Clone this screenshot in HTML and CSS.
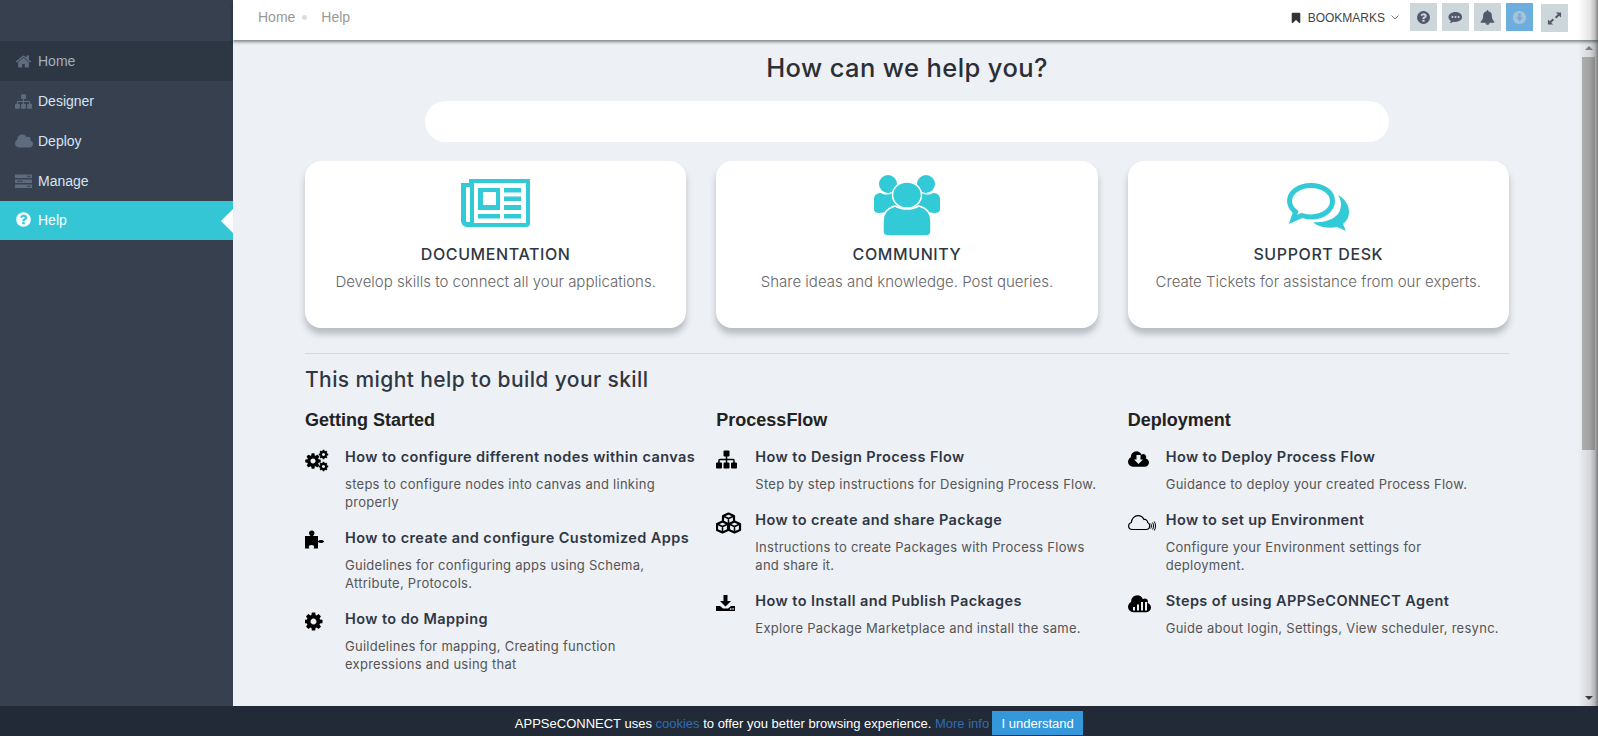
FILE: index.html
```html
<!DOCTYPE html>
<html lang="en">
<head>
  <meta charset="UTF-8" />
  <title>Help - APPSeCONNECT</title>
  <link rel="stylesheet" href="styles.css">
</head>
<body>
  <svg class="sprites" width="0" height="0">
    <symbol id="i-home" viewBox="0 0 1792 1792"><path d="M1472 992v480q0 26-19 45t-45 19h-384v-384h-256v384h-384q-26 0-45-19t-19-45v-480q0-1 .5-3t.5-3l575-474 575 474q1 2 1 6zm223-69l-62 74q-8 9-21 11h-3q-13 0-21-7l-692-577-692 577q-12 8-24 7-13-2-21-11l-62-74q-8-10-7-23.500t11-21.500l719-599q32-26 76-26t76 26l244 204v-195q0-14 9-23t23-9h192q14 0 23 9t9 23v408l219 182q10 8 11 21.500t-7 23.500z"/></symbol>
    <symbol id="i-sitemap" viewBox="0 0 1792 1792"><path d="M1792 1248v320q0 40-28 68t-68 28h-320q-40 0-68-28t-28-68v-320q0-40 28-68t68-28h96v-192h-512v192h96q40 0 68 28t28 68v320q0 40-28 68t-68 28h-320q-40 0-68-28t-28-68v-320q0-40 28-68t68-28h96v-192h-512v192h96q40 0 68 28t28 68v320q0 40-28 68t-68 28h-320q-40 0-68-28t-28-68v-320q0-40 28-68t68-28h96v-192q0-52 38-90t90-38h512v-192h-96q-40 0-68-28t-28-68v-320q0-40 28-68t68-28h320q40 0 68 28t28 68v320q0 40-28 68t-68 28h-96v192h512q52 0 90 38t38 90v192h96q40 0 68 28t28 68z"/></symbol>
    <symbol id="i-cloud" viewBox="0 0 1920 1792"><path d="M1920 1216q0 159-112.500 271.500t-271.500 112.500h-1088q-185 0-316.500-131.500t-131.500-316.500q0-132 71-241.500t187-163.500q-2-28-2-43 0-212 150-362t362-150q158 0 286.500 88t187.500 230q70-62 166-62 106 0 181 75t75 181q0 75-41 138 129 30 213 134.500t84 239.500z"/></symbol>
    <symbol id="i-question" viewBox="0 0 1792 1792"><path d="M1024 1376v-192q0-14-9-23t-23-9h-192q-14 0-23 9t-9 23v192q0 14 9 23t23 9h192q14 0 23-9t9-23zm256-672q0-88-55.500-163t-138.500-116-170-41q-243 0-371 213-15 24 8 42l132 100q7 6 19 6 16 0 25-12 53-68 86-92 34-24 86-24 48 0 85.500 26t37.500 59q0 38-20 61t-68 45q-63 28-115.500 86.500t-52.500 125.500v36q0 14 9 23t23 9h192q14 0 23-9t9-23q0-19 21.500-49.500t54.500-49.500q32-18 49-28.500t46-35 44.500-48 28-60.500 12.500-81zm384 192q0 209-103 385.500t-279.500 279.500-385.500 103-385.500-103-279.500-279.500-103-385.500 103-385.500 279.500-279.500 385.500-103 385.500 103 279.500 279.500 103 385.500z"/></symbol>
    <symbol id="i-bell" viewBox="0 0 1792 1792"><path d="M912 1696q0-16-16-16-59 0-101.500-42.500t-42.500-101.500q0-16-16-16t-16 16q0 73 51.500 124.500t124.500 51.500q16 0 16-16zm816-288q0 52-38 90t-90 38h-448q0 106-75 181t-181 75-181-75-75-181h-448q-52 0-90-38t-38-90q50-42 91-88t85-119.500 74.500-158.500 50-206 19.500-260q0-152 117-282.500t307-158.500q-8-19-8-39 0-40 28-68t68-28 68 28 28 68q0 20-8 39 190 28 307 158.500t117 282.500q0 139 19.500 260t50 206 74.500 158.500 85 119.500 91 88z"/></symbol>
    <symbol id="i-bookmark" viewBox="0 0 1792 1792"><path d="M1420 128q23 0 44 9 33 13 52.500 41t19.500 62v1289q0 34-19.500 62t-52.500 41q-19 8-44 8-48 0-83-32l-441-424-441 424q-36 33-83 33-23 0-44-9-33-13-52.500-41t-19.500-62v-1289q0-34 19.500-62t52.500-41q21-9 44-9h1048z"/></symbol>
    <symbol id="i-cog" viewBox="0 0 1792 1792"><path d="M1152 896q0-106-75-181t-181-75-181 75-75 181 75 181 181 75 181-75 75-181zm512-109v222q0 12-8 23t-20 13l-185 28q-19 54-39 91 35 50 107 138 10 12 10 25t-9 23q-27 37-99 108t-94 71q-12 0-26-9l-138-108q-44 23-91 38-16 136-29 186-7 28-36 28h-222q-14 0-24.500-8.500t-11.500-21.500l-28-184q-49-16-90-37l-141 107q-10 9-25 9-14 0-25-11-126-114-165-168-7-10-7-23 0-12 8-23 15-21 51-66.500t54-70.500q-27-50-41-99l-183-27q-13-2-21-12.500t-8-23.500v-222q0-12 8-23t19-13l186-28q14-46 39-92-40-57-107-138-10-12-10-24 0-10 9-23 26-36 98.500-107.500t94.500-71.500q13 0 26 10l138 107q44-23 91-38 16-136 29-186 7-28 36-28h222q14 0 24.500 8.500t11.500 21.500l28 184q49 16 90 37l142-107q9-9 24-9 13 0 25 10 129 119 165 170 7 8 7 22 0 12-8 23-15 21-51 66.500t-54 70.500q26 50 41 98l183 28q13 2 21 12.500t8 23.500z"/></symbol>
  </svg>

  <div class="app">
    <aside class="sidebar">
      <nav class="side-nav">
        <a class="side-item side-item-current"><svg class="side-icon"><use href="#i-home"/></svg>Home</a>
        <a class="side-item"><svg class="side-icon"><use href="#i-sitemap"/></svg>Designer</a>
        <a class="side-item"><svg class="side-icon side-icon-wide"><use href="#i-cloud"/></svg>Deploy</a>
        <a class="side-item">
          <svg class="side-icon" viewBox="0 0 17 14"><path d="M0 0h17v3.500H0zM0 5h17v3.500H0zM0 10h17v3.500H0z"/><path class="side-slot" d="M12 1.200h3.500v1H12zM2 6.200h6v1H2zM12 11.200h3.500v1H12z"/></svg>
          Manage
        </a>
        <a class="side-item side-item-active"><svg class="side-icon"><use href="#i-question"/></svg>Help</a>
      </nav>
    </aside>

    <div class="main">
      <header class="topbar">
        <div class="crumbs">
          <span>Home</span>
          <i class="crumb-dot"></i>
          <span>Help</span>
        </div>
        <div class="top-tools">
          <div class="bookmarks">
            <svg class="bookmark-icon"><use href="#i-bookmark"/></svg>
            <span>BOOKMARKS</span>
            <svg class="bookmark-caret" viewBox="0 0 8 5"><path d="M.5.5 4 4 7.500.5" fill="none" stroke="#777" stroke-width="1"/></svg>
          </div>
          <button class="tool-btn"><svg class="tool-icon"><use href="#i-question"/></svg></button>
          <button class="tool-btn">
            <svg class="tool-icon" viewBox="0 0 16 16"><path d="M8 2C3.600 2 .5 4.500.5 7.500c0 1.700 1 3.200 2.600 4.200-.2 1-.7 1.800-1.300 2.500 1.500-.2 2.800-.8 3.800-1.700.6.100 1.200.2 1.900.2 4.400 0 7.500-2.300 7.500-5.200S12.400 2 8 2z"/><circle class="tool-dot" cx="4.700" cy="7.500" r="1.100"/><circle class="tool-dot" cx="8" cy="7.500" r="1.100"/><circle class="tool-dot" cx="11.300" cy="7.500" r="1.100"/></svg>
          </button>
          <button class="tool-btn"><svg class="tool-icon"><use href="#i-bell"/></svg></button>
          <button class="tool-btn tool-btn-blue">
            <svg class="tool-icon" viewBox="0 0 16 16"><circle cx="8" cy="8" r="7"/><path class="tool-arrow" d="M6.600 3.500h2.800v4.300h2.200L8 12 4.400 7.800h2.200z"/></svg>
          </button>
          <button class="tool-btn tool-btn-last">
            <svg class="tool-icon" viewBox="0 0 16 16"><path d="M9.500 1.500H15V7l-2-2-3 3-1.500-1.500 3-3zM6.500 14.500H1V9l2 2 3-3 1.500 1.500-3 3z"/></svg>
          </button>
        </div>
      </header>

      <div class="body-row">
        <main class="content">
          <h1 class="help-title">How can we help you?</h1>
          <div class="search-box"></div>

          <section class="card-grid">
            <div class="card">
              <svg class="card-icon" width="69" height="61" viewBox="0 0 69 61">
                <g transform="translate(0 4)">
                  <path d="M8 0H69V44a4 4 0 0 1-4 4H6a6 6 0 0 1-6-6V4H8z"/>
                  <path class="card-cut" d="M13 4H65V44H13zM5 8H9V43H6.500A1.500 1.500 0 0 1 5 41.500z"/>
                  <path d="M17 9H39V31H17zM43 9H60V13.500H43zM43 17.500H60V22H43zM43 26H60V31H43zM17 35H39V39.500H17zM43 35H60V39.500H43z"/>
                  <path class="card-cut" d="M22 13H35V26H22z"/>
                </g>
              </svg>
              <h3 class="card-title">DOCUMENTATION</h3>
              <p class="card-text">Develop skills to connect all your applications.</p>
            </div>
            <div class="card">
              <svg class="card-icon" width="66" height="61" viewBox="0 0 66 61">
                <ellipse cx="14" cy="9" rx="9" ry="9"/>
                <ellipse cx="52" cy="9" rx="9" ry="9"/>
                <path d="M0 34V24C0 20 3 18 7 18c3 2 8 2 11 0l7 8v9L6 38C2 38 0 37 0 34zM66 34V24c0-4-3-6-7-6-3 2-8 2-11 0l-7 8v9l19 3c4 0 6-1 6-4z"/>
                <path class="card-ring" d="M9 56V46C9 38 14 33 21 31c7 4 17 4 24 0 7 2 12 7 12 15v10c0 3-2 5-5 5H14c-3 0-5-2-5-5z"/>
                <ellipse class="card-ring" cx="33" cy="20" rx="14.500" ry="13"/>
              </svg>
              <h3 class="card-title">COMMUNITY</h3>
              <p class="card-text">Share ideas and knowledge. Post queries.</p>
            </div>
            <div class="card">
              <svg class="card-icon" width="62" height="61" viewBox="0 0 62 61">
                <g transform="translate(0 8)">
                  <path d="M51 12c7 4 11 10 11 17 0 5-2 9-6 12l3 7-9-4c-4 1-9 1-14 0-4-1-7-2-10-5 10 1 20-2 25-8 4-6 4-13 0-19z"/>
                  <path class="chat-line" d="M24 2.500C12 2.500 2.500 9.500 2.500 18c0 4.500 2.500 8 6 11l-2.500 7.500 9-4c3 1 6 1.500 9 1.500 12 0 21.500-7 21.500-16S36 2.500 24 2.500z"/>
                </g>
              </svg>
              <h3 class="card-title">SUPPORT DESK</h3>
              <p class="card-text">Create Tickets for assistance from our experts.</p>
            </div>
          </section>

          <hr class="divider">
          <h2 class="skill-title">This might help to build your skill</h2>

          <section class="tip-grid">
            <div class="tip-col tip-col-first">
              <h4 class="tip-head">Getting Started</h4>
              <div class="tip">
                <svg class="tip-icon" viewBox="0 0 28 24">
                  <svg x="-1" y="4" width="18" height="18"><use href="#i-cog"/></svg>
                  <svg x="13" y="1" width="11" height="11"><use href="#i-cog"/></svg>
                  <svg x="13" y="13" width="11" height="11"><use href="#i-cog"/></svg>
                </svg>
                <div>
                  <div class="tip-title">How to configure different nodes within canvas</div>
                  <p class="tip-text">steps to configure nodes into canvas and linking properly</p>
                </div>
              </div>
              <div class="tip">
                <svg class="tip-icon" viewBox="0 0 28 24"><path d="M0 7h5.500C4.500 6 4 5 4 4c0-1.500 1.200-2.500 2.800-2.500S9.500 2.500 9.500 4c0 1-.5 2-1.500 3h5v5c1-.8 2-1 3-1 1.500 0 3 .6 3 1.500S17.500 14 16 14c-1 0-2-.3-3-1v6.500H8.500c.8-1 1-2 0-3-1-.7-3-.7-4 0-1 1-.8 2 0 3H0z"/></svg>
                <div>
                  <div class="tip-title">How to create and configure Customized Apps</div>
                  <p class="tip-text">Guidelines for configuring apps using Schema, Attribute, Protocols.</p>
                </div>
              </div>
              <div class="tip">
                <svg class="tip-icon" viewBox="0 0 28 24"><svg x="-2" y="1" width="21" height="21"><use href="#i-cog"/></svg></svg>
                <div>
                  <div class="tip-title">How to do Mapping</div>
                  <p class="tip-text">Guildelines for mapping, Creating function expressions and using that</p>
                </div>
              </div>
            </div>

            <div class="tip-col tip-col-second">
              <h4 class="tip-head">ProcessFlow</h4>
              <div class="tip">
                <svg class="tip-icon" viewBox="0 0 28 24"><svg x="0" y="1" width="21" height="21"><use href="#i-sitemap"/></svg></svg>
                <div>
                  <div class="tip-title">How to Design Process Flow</div>
                  <p class="tip-text">Step by step instructions for Designing Process Flow.</p>
                </div>
              </div>
              <div class="tip">
                <svg class="tip-icon" viewBox="0 0 28 24">
                  <path class="cube" d="M12.500 2.500l5.500 2.500v6l-5.500 2.500L7 11V5z"/>
                  <path class="cube" d="M6.500 10.500L12 13v6l-5.500 2.500L1 19v-6z"/>
                  <path class="cube" d="M18.500 10.500L24 13v6l-5.500 2.500L13 19v-6z"/>
                  <path d="M7 5l5.500 2.500L18 5M1 13l5.500 2.500L12 13M13 13l5.500 2.500L24 13M12.500 7.500v5M6.500 15.500v5M18.500 15.500v5" fill="none" stroke="#000" stroke-width="1.600"/>
                </svg>
                <div>
                  <div class="tip-title">How to create and share Package</div>
                  <p class="tip-text">Instructions to create Packages with Process Flows and share it.</p>
                </div>
              </div>
              <div class="tip">
                <svg class="tip-icon" viewBox="0 0 28 24"><path d="M7.500 3h4v6H15l-5.500 5.500L4 9h3.500z"/><path d="M0 14h4l3 2.500h5l3-2.500h4v5H0z"/><path class="tip-cut" d="M14 16.300h1.400v1.400H14zM16.400 16.300h1.400v1.400h-1.400z"/></svg>
                <div>
                  <div class="tip-title">How to Install and Publish Packages</div>
                  <p class="tip-text">Explore Package Marketplace and install the same.</p>
                </div>
              </div>
            </div>

            <div class="tip-col tip-col-third">
              <h4 class="tip-head">Deployment</h4>
              <div class="tip">
                <svg class="tip-icon" viewBox="0 0 28 24">
                  <svg x="0" y="1" width="21" height="20"><use href="#i-cloud"/></svg>
                  <path class="tip-cut" d="M8.500 7h4v4.500H15L10.500 16 6 11.500h2.500z"/>
                </svg>
                <div>
                  <div class="tip-title">How to Deploy Process Flow</div>
                  <p class="tip-text">Guidance to deploy your created Process Flow.</p>
                </div>
              </div>
              <div class="tip">
                <svg class="tip-icon" viewBox="0 0 28 24"><path d="M4.500 18.500C2 18.500.6 16.800.6 15c0-1.800 1.200-3 2.800-3.500C3.600 7.500 6.500 4.700 10 4.700c2.800 0 4.800 1.500 6 3.800 2-.3 3.500 1 3.700 3 1.300.5 2 1.700 2 3.200 0 2.300-1.500 3.800-3.700 3.800z" fill="none" stroke="#000" stroke-width="1.200"/><path d="M22.800 12.500c.8 1.500.8 3.500 0 5M24.600 11.500c1.200 2 1.200 5 0 7M26.300 10.500c1.600 2.600 1.600 6.400 0 9" fill="none" stroke="#000" stroke-width="1"/></svg>
                <div>
                  <div class="tip-title">How to set up Environment</div>
                  <p class="tip-text">Configure your Environment settings for deployment.</p>
                </div>
              </div>
              <div class="tip">
                <svg class="tip-icon" viewBox="0 0 28 24">
                  <svg x="0" y="1" width="23" height="21.500"><use href="#i-cloud"/></svg>
                  <path class="tip-cut" d="M5 15h2v3.500H5zM9 12.500h2v6H9zM13 10h2v8.500h-2zM17 10h2v8.500h-2z"/>
                </svg>
                <div>
                  <div class="tip-title">Steps of using APPSeCONNECT Agent</div>
                  <p class="tip-text">Guide about login, Settings, View scheduler, resync.</p>
                </div>
              </div>
            </div>
          </section>
        </main>

        <div class="scrollbar">
          <i class="scroll-up"></i>
          <div class="scroll-thumb"></div>
          <i class="scroll-down"></i>
        </div>
      </div>
    </div>
  </div>

  <div class="edge-shade"></div>

  <div class="cookie-bar">
    <span>APPSeCONNECT uses <a class="cookie-link">cookies</a> to offer you better browsing experience. <a class="cookie-link">More info</a></span>
    <button class="cookie-btn">I understand</button>
  </div>
</body>
</html>
```

FILE: styles.css
```css
* {
  box-sizing: border-box;
  margin: 0;
  padding: 0;
}

html, body {
  height: 100%;
  overflow: hidden;
}

body {
  font-family: 'Liberation Sans', Arial, sans-serif;
  background: #edf0f4;
}

.sprites {
  display: block;
  height: 0;
}

.app {
  display: flex;
  height: 736px;
}

/* sidebar */
.sidebar {
  width: 233px;
  flex-shrink: 0;
  background: #36404f;
  padding-top: 41px;
}

.side-item {
  position: relative;
  display: flex;
  align-items: center;
  height: 40px;
  padding-left: 15px;
  color: #d6e4f5;
  font-size: 14px;
}

.side-icon {
  width: 17px;
  height: 17px;
  margin-right: 6px;
  fill: #5f6b7f;
}

.side-icon-wide {
  width: 18px;
  height: 18px;
  margin-right: 5px;
}

.side-slot {
  fill: #36404f;
}

.side-item-current {
  background: #2d3643;
  color: #a3aebc;
}

.side-item-active {
  height: 39px;
  padding-bottom: 2px;
  background: #35c6d6;
  color: #fff;
}

.side-item-active .side-icon {
  fill: #fff;
}

.side-item-active::after {
  content: "";
  position: absolute;
  right: 0;
  top: 8px;
  border-style: solid;
  border-width: 12px 12px 12px 0;
  border-color: transparent #fff transparent transparent;
}

/* top bar */
.main {
  flex: 1;
  display: flex;
  flex-direction: column;
  min-width: 0;
}

.topbar {
  position: relative;
  z-index: 2;
  display: flex;
  align-items: flex-start;
  justify-content: space-between;
  height: 40px;
  padding: 0 30px 0 25px;
  background: #fff;
  box-shadow: 0 2px 3px rgba(0,0,0,0.45);
}

.crumbs {
  display: flex;
  align-items: center;
  height: 34px;
  color: #999;
  font-size: 14px;
}

.crumb-dot {
  width: 5px;
  height: 5px;
  margin: 0 14px 0 7px;
  border-radius: 50%;
  background: #ddd;
}

.top-tools {
  display: flex;
  align-items: flex-start;
  gap: 5px;
  padding-top: 3px;
}

.bookmarks {
  display: flex;
  align-items: center;
  height: 29px;
  margin-right: 6px;
  color: #444;
  font-size: 12px;
}

.bookmark-icon {
  width: 12px;
  height: 12px;
  margin-right: 6px;
  fill: #333;
}

.bookmark-caret {
  width: 8px;
  height: 5px;
  margin-left: 6px;
}

.tool-btn {
  display: flex;
  align-items: center;
  justify-content: center;
  width: 27px;
  height: 28px;
  border: none;
  background: #cdd6da;
}

.tool-icon {
  width: 15px;
  height: 15px;
  fill: #4f5a6b;
}

.tool-dot {
  fill: #cdd6da;
}

.tool-btn-blue {
  background: #6cafde;
}

.tool-btn-blue .tool-icon {
  fill: #a9c3d6;
}

.tool-arrow {
  fill: #6cafde;
}

.tool-btn-last {
  margin: 1px 0 0 3px;
}

/* help content */
.body-row {
  flex: 1;
  display: flex;
  min-height: 0;
}

.content {
  flex: 1;
  min-width: 0;
  padding: 13px 72px 0;
  color: #2f3744;
  font-family: Inter, 'Noto Sans', sans-serif;
}

.help-title {
  height: 30px;
  color: #2b2f36;
  font-size: 25.500px;
  font-weight: 500;
  letter-spacing: 0.4px;
  line-height: 30px;
  text-align: center;
}

.search-box {
  height: 41px;
  margin: 18px 120px 19px;
  border-radius: 21px;
  background: #fff;
}

.card-grid,
.tip-grid {
  display: grid;
  grid-template-columns: repeat(3, minmax(0, 1fr));
  column-gap: 30px;
}

.card {
  height: 167px;
  padding-top: 14px;
  border-radius: 16px;
  background: #fff;
  box-shadow: 0 6px 6px rgba(60,70,80,0.3);
  text-align: center;
}

.card-icon {
  display: block;
  margin: 0 auto;
  fill: #32cad6;
}

.card-cut {
  fill: #fff;
}

.card-ring {
  stroke: #fff;
  stroke-width: 1.500;
}

.chat-line {
  fill: none;
  stroke: #32cad6;
  stroke-width: 5;
}

.card-title {
  margin-top: 7px;
  color: #2f3744;
  font-size: 16px;
  font-weight: 500;
  letter-spacing: 0.6px;
  line-height: 22px;
}

.card-text {
  margin-top: 6px;
  color: #666;
  font-size: 15px;
  font-weight: 300;
  line-height: 22px;
}

.divider {
  height: 1px;
  margin: 25px 0 13px;
  border: none;
  background: #d6dadd;
}

.skill-title {
  color: #2f3744;
  font-size: 21px;
  font-weight: 500;
  letter-spacing: 0.4px;
  line-height: 26px;
}

.tip-grid {
  margin-top: 17px;
}

.tip-head {
  margin-bottom: 18px;
  color: #222;
  font-family: 'Liberation Sans', Arial, sans-serif;
  font-size: 18px;
  font-weight: 700;
  line-height: 20px;
}

.tip {
  display: grid;
  grid-template-columns: 40px minmax(0, 1fr);
  margin-bottom: 18px;
}

.tip-col-second .tip {
  grid-template-columns: 39px minmax(0, 1fr);
}

.tip-col-third .tip {
  grid-template-columns: 38px minmax(0, 1fr);
}

.tip-icon {
  width: 28px;
  height: 24px;
  fill: #000;
}

.tip-cut {
  fill: #edf0f4;
}

.cube {
  fill: #edf0f4;
  stroke: #000;
  stroke-width: 2.200;
  stroke-linejoin: round;
}

.tip-title {
  color: #2f3744;
  font-size: 14.500px;
  font-weight: 600;
  letter-spacing: 0.42px;
  line-height: 18px;
  white-space: nowrap;
}

.tip-text {
  margin-top: 9px;
  color: #555;
  font-size: 13px;
  letter-spacing: 0.27px;
  line-height: 18px;
}

.tip-col-third .tip-text {
  padding-right: 8px;
}

/* fake scrollbar */
.scrollbar {
  position: relative;
  display: flex;
  flex-direction: column;
  align-items: center;
  width: 17px;
  flex-shrink: 0;
  padding: 6px 2px 0 0;
}

.scroll-up {
  border-style: solid;
  border-width: 0 4px 4px;
  border-color: transparent transparent #8a8a8a;
}

.scroll-thumb {
  width: 13px;
  height: 393px;
  margin-top: 7px;
  background: #b4b4b4;
}

.scroll-down {
  margin-top: 246px;
  border-style: solid;
  border-width: 4px 4px 0;
  border-color: #444 transparent transparent;
}

.edge-shade {
  position: fixed;
  top: 0;
  right: 0;
  bottom: 0;
  width: 20px;
  background: linear-gradient(to right, rgba(0,0,0,0), rgba(0,0,0,0.1) 60%, rgba(0,0,0,0.25) 85%, rgba(0,0,0,0.5));
  pointer-events: none;
  z-index: 3;
}

/* cookie notice */
.cookie-bar {
  position: fixed;
  left: 0;
  right: 0;
  bottom: 0;
  z-index: 4;
  display: flex;
  align-items: center;
  justify-content: center;
  gap: 3px;
  height: 30px;
  padding: 5px 0 1px;
  background: #212a36;
  color: #fff;
  font-size: 13px;
}

.cookie-link {
  color: #2f6db5;
}

.cookie-btn {
  width: 91px;
  height: 24px;
  border: none;
  background: #3498db;
  color: #fff;
  font-family: 'Liberation Sans', Arial, sans-serif;
  font-size: 13px;
}
```
